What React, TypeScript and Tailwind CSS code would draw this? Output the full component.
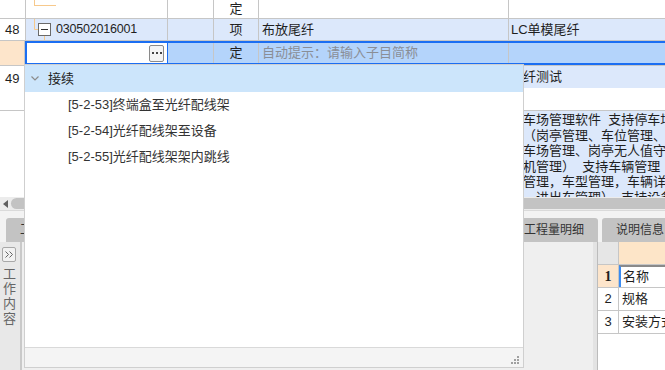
// Grid editor with an open quota lookup dropdown

const ITEMS = [
  "[5-2-53]终端盒至光纤配线架",
  "[5-2-54]光纤配线架至设备",
  "[5-2-55]光纤配线架架内跳线",
];

const MEMO_LINES = [
  "停车场管理软件  支持停车场管理",
  "理（岗亭管理、车位管理、",
  "停车场管理、岗亭无人值守",
  "相机管理）  支持车辆管理",
  "辆管理，车型管理，车辆详",
  "息、进出车管理）  支持设备",
];

const TABS = ["工料机显示", "单价构成", "标准换算", "换算信息", "安装费用", "特征及内容", "工程量明细", "说明信息"];

function Chevron() {
  return (
    <svg width="8" height="5" viewBox="0 0 8 5" className="shrink-0">
      <polyline points="0.5,0.5 4,4 7.5,0.5" fill="none" stroke="#8c8c8c" strokeWidth="1.2" />
    </svg>
  );
}

function Grip() {
  return (
    <svg width="8" height="8" viewBox="0 0 8 8">
      {[
        [6, 0],
        [3, 3],
        [6, 3],
        [0, 6],
        [3, 6],
        [6, 6],
      ].map(([x, y]) => (
        <rect key={`${x}-${y}`} x={x} y={y} width="2" height="2" fill="#a0a0a0" />
      ))}
    </svg>
  );
}

export default function App() {
  return (
    <div className="relative w-[665px] h-[370px] overflow-hidden bg-white text-[13px] text-[#1f1f1f] font-['Liberation_Sans','Noto_Sans_CJK_SC',sans-serif]">
      {/* ── upper grid ─────────────────────────── */}
      <div className="flex flex-col h-[197px] overflow-hidden">
        {/* row: 定 (child of previous) */}
        <div className="flex h-[19px] shrink-0">
          <div className="w-[26px] shrink-0 border-r border-b border-[#c6c6c6]" />
          <div className="relative w-[142px] shrink-0 border-r border-b border-[#c6c6c6]">
            <svg width="30" height="18" className="absolute left-0 top-0">
              <line x1="8.5" y1="0" x2="8.5" y2="6" stroke="#f7c98c" />
              <line x1="8.5" y1="5.5" x2="34" y2="5.5" stroke="#f7c98c" />
            </svg>
          </div>
          <div className="w-[46px] shrink-0 border-r border-b border-[#c6c6c6]" />
          <div className="w-[45px] shrink-0 border-r border-b border-[#c6c6c6] flex items-center justify-center">定</div>
          <div className="w-[250px] shrink-0 border-r border-b border-[#c6c6c6]" />
          <div className="flex-1 border-b border-[#c6c6c6]" />
        </div>

        {/* row 48 */}
        <div className="flex h-[22px] shrink-0">
          <div className="w-[26px] shrink-0 border-r border-b border-[#c6c6c6] pl-[5px] flex items-center">48</div>
          <div className="relative w-[142px] shrink-0 border-r border-b border-[#c6c6c6] bg-[#dce8fb] flex items-center pl-[12px]">
            <svg width="20" height="21" className="absolute left-0 top-0">
              <line x1="8.5" y1="0" x2="8.5" y2="10.5" stroke="#f7c98c" />
              <line x1="8.5" y1="10.5" x2="12" y2="10.5" stroke="#f7c98c" />
              <line x1="18.5" y1="16" x2="18.5" y2="21" stroke="#f7c98c" />
            </svg>
            <div className="relative w-[13px] h-[13px] border border-[#6a6a6a] bg-white flex items-center justify-center">
              <div className="w-[7px] h-px bg-[#333]" />
            </div>
            <span className="ml-[5px] text-[12.5px] tracking-[-0.2px]">030502016001</span>
          </div>
          <div className="w-[46px] shrink-0 border-r border-b border-[#c6c6c6] bg-[#dce8fb]" />
          <div className="w-[45px] shrink-0 border-r border-b border-[#c6c6c6] bg-[#dce8fb] flex items-center justify-center">项</div>
          <div className="w-[250px] shrink-0 border-r border-b border-[#c6c6c6] bg-[#dce8fb] flex items-center pl-[3px]">布放尾纤</div>
          <div className="flex-1 border-b border-[#c6c6c6] bg-[#dce8fb] flex items-center pl-[2px]">LC单模尾纤</div>
        </div>

        {/* editing row */}
        <div className="flex h-[24px] shrink-0">
          <div className="w-[25px] shrink-0 border-r border-[#c6c6c6] bg-[#fde5cb]" />
          <div className="flex-1 flex border-y-2 border-[#1b6ef2]">
            <div className="w-[143px] shrink-0 bg-white border-l-2 border-r border-[#1b6ef2] flex items-center justify-end pr-[3px]">
              <div className="w-[15px] h-[17px] rounded-[2px] border border-[#8a8a8a] bg-[#f4f4f4] flex items-center justify-center gap-[2px]">
                <div className="w-[2px] h-[2px] bg-[#444]" />
                <div className="w-[2px] h-[2px] bg-[#444]" />
                <div className="w-[2px] h-[2px] bg-[#444]" />
              </div>
            </div>
            <div className="w-[46px] shrink-0 border-r border-[#c6c6c6] bg-[#b4d4fb]" />
            <div className="w-[45px] shrink-0 border-r border-[#c6c6c6] bg-[#b4d4fb] flex items-center justify-center">定</div>
            <div className="w-[250px] shrink-0 border-r border-[#c6c6c6] bg-[#b4d4fb] flex items-center pl-[3px] text-[#8a8e96]">
              自动提示：请输入子目简称
            </div>
            <div className="flex-1 bg-[#b4d4fb]" />
          </div>
        </div>

        {/* row 49 */}
        <div className="flex h-[46px] shrink-0 border-t border-[#c6c6c6]">
          <div className="w-[26px] shrink-0 border-r border-b border-[#c6c6c6] pl-[5px] pt-[3px]">49</div>
          <div className="flex-1 flex flex-col border-b border-[#c6c6c6]">
            <div className="h-[22px] flex bg-[#dce8fb]">
              <div className="w-[482px] shrink-0" />
              <div className="flex-1 flex items-center pl-[2px]">光纤测试</div>
            </div>
            <div className="flex-1" />
          </div>
        </div>

        {/* row 50 */}
        <div className="flex flex-1">
          <div className="w-[26px] shrink-0 border-r border-[#c6c6c6]" />
          <div className="flex-1 flex bg-[#dce8fb]">
            <div className="w-[482px] shrink-0" />
            <div className="flex-1 overflow-hidden pl-[2px] pt-[1px] leading-[15.5px] whitespace-pre">
              {MEMO_LINES.map((l) => (
                <div key={l}>{l}</div>
              ))}
            </div>
          </div>
        </div>
      </div>

      {/* ── horizontal scrollbar ───────────────── */}
      <div className="flex items-center h-[13px] bg-[#ececec] pl-[3px]">
        <svg width="5" height="8" viewBox="0 0 5 8">
          <polygon points="5,0 0,4 5,8" fill="#606060" />
        </svg>
        <div className="ml-[3px] flex-1 h-[11px] rounded-l-full bg-[#c3c3c3]" />
      </div>

      {/* ── tab strip ─────────────────────────── */}
      <div className="h-[8px] bg-[#f3f3f3] border-t border-[#dadada]" />
      <div className="flex h-[24px] gap-[4px] pl-[6px] bg-[#f3f3f3] whitespace-nowrap">
        {TABS.map((t) => (
          <div key={t} className="shrink-0 px-[14px] rounded-t-[3px] bg-[#c3c3c3] text-[12px] leading-[24px] text-[#333]">
            {t}
          </div>
        ))}
      </div>

      {/* ── lower panel ───────────────────────── */}
      <div className="flex h-[128px]">
        <div className="w-[22px] shrink-0 bg-[#e8e8e8] border-r-2 border-[#c9c9c9] flex flex-col pl-[2px] pt-[5px]">
          <div className="w-[14px] h-[15px] rounded-[2px] border border-[#a8a8a8] bg-[#f1f1f1] flex items-center justify-center">
            <svg width="9" height="7" viewBox="0 0 9 7">
              <polyline points="0.5,0.5 3.5,3.5 0.5,6.5" fill="none" stroke="#666" />
              <polyline points="4.5,0.5 7.5,3.5 4.5,6.5" fill="none" stroke="#666" />
            </svg>
          </div>
          <div className="mt-[4px] pl-[1px] text-[13px] leading-[15px] text-[#666]">
            <div>工</div>
            <div>作</div>
            <div>内</div>
            <div>容</div>
          </div>
        </div>
        <div className="flex-1 bg-[#efefef]" />
        <div className="w-[5px] shrink-0 bg-[#e3e3e3] border-r border-[#bcbcbc]" />
        <div className="w-[67px] shrink-0 bg-white flex flex-col whitespace-nowrap overflow-hidden">
          <div className="flex h-[23px] border-b border-[#c6c6c6]">
            <div className="w-[21px] shrink-0 bg-[#e6e6e6] border-r border-[#c6c6c6]" />
            <div className="flex-1 bg-[#fde5c8]" />
          </div>
          <div className="flex h-[23px] border-b border-[#c6c6c6]">
            <div className="w-[21px] shrink-0 bg-[#fde5cb] border-r border-[#c6c6c6] flex items-center justify-center font-['Liberation_Serif',serif] font-bold text-[14px]">
              1
            </div>
            <div className="flex-1 border-l-2 border-t-2 border-l-[#3c8cf2] border-t-[#8a8a8a] flex items-center pl-[2px]">名称</div>
          </div>
          <div className="flex h-[23px] border-b border-[#c6c6c6]">
            <div className="w-[21px] shrink-0 border-r border-[#c6c6c6] flex items-center justify-center">2</div>
            <div className="flex-1 flex items-center pl-[3px]">规格</div>
          </div>
          <div className="flex h-[23px] border-b border-[#c6c6c6]">
            <div className="w-[21px] shrink-0 border-r border-[#c6c6c6] flex items-center justify-center">3</div>
            <div className="flex-1 flex items-center pl-[3px]">安装方式</div>
          </div>
        </div>
      </div>

      {/* ── lookup dropdown (overlay) ─────────── */}
      <div className="absolute left-[24px] top-[64px] w-[500px] h-[304px] border border-[#cfcfcf] bg-white flex flex-col">
        <div className="h-[27px] shrink-0 bg-[#cce5fb] flex items-center pl-[6px]">
          <Chevron />
          <span className="ml-[9px] text-[#222]">接续</span>
        </div>
        <div className="flex-1 flex flex-col">
          {ITEMS.map((it) => (
            <div key={it} className="h-[26px] flex items-center pl-[43px] text-[#333]">
              {it}
            </div>
          ))}
        </div>
        <div className="h-[20px] shrink-0 border-t border-[#d9d9d9] bg-[#f4f4f4] flex items-end justify-end pr-[4px] pb-[3px]">
          <Grip />
        </div>
      </div>
    </div>
  );
}
